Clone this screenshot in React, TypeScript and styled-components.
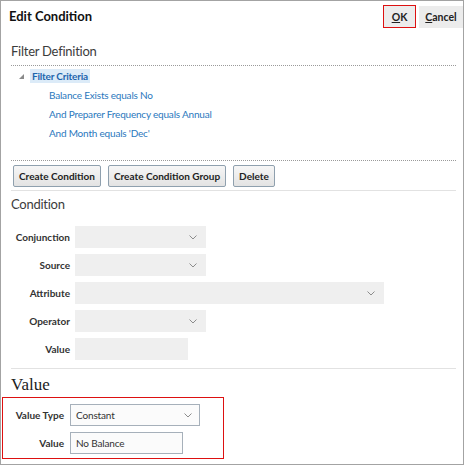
import { Fragment } from "react";
import styled, { createGlobalStyle } from "styled-components";

const GlobalStyle = createGlobalStyle`
    html, body {
        margin: 0;
        padding: 0;
        background: #ffffff;
    }
    * {
        box-sizing: border-box;
    }
`;

const Dialog = styled.div`
    width: 464px;
    height: 465px;
    border: 1px solid #a3a3a3;
    background: #ffffff;
    font-family: Lato, "Liberation Sans", sans-serif;
    color: #333333;
    overflow: hidden;
`;

const Header = styled.div`
    display: flex;
    justify-content: space-between;
    align-items: flex-start;
    height: 31px;
    padding: 4px 0 0 8px;
`;

const Title = styled.h1`
    margin: 3px 0 0;
    font-size: 13px;
    line-height: 16px;
    font-weight: 700;
    color: #111111;
`;

const HeaderButtons = styled.div`
    display: flex;
    gap: 3px;
`;

const HeaderButton = styled.button`
    width: ${(props) => props.$width}px;
    height: ${(props) => (props.$marked ? 23 : 22)}px;
    margin-top: ${(props) => (props.$marked ? 0 : 1)}px;
    padding: 0;
    border: 1px solid ${(props) => (props.$marked ? "#dd1111" : "transparent")};
    background: #ececec;
    font-family: inherit;
    font-size: 10.5px;
    font-weight: 700;
    color: #222222;
    cursor: pointer;

    u {
        text-decoration: underline;
    }
`;

const Body = styled.div`
    padding: 0 7px 0 10px;
`;

const SectionTitle = styled.h2`
    margin: ${(props) => props.$top || 0}px 0 0;
    font-size: 13px;
    line-height: 16px;
    font-weight: 400;
    letter-spacing: -0.25px;
    color: #3c3c3c;
`;

const SerifTitle = styled.h2`
    margin: 6px 0 0;
    font-family: "Liberation Serif", serif;
    font-size: 17px;
    line-height: 20px;
    font-weight: 400;
    color: #222222;
`;

const DottedRule = styled.div`
    border-top: 1px dotted #9a9a9a;
    margin-top: ${(props) => props.$top || 0}px;
`;

const SolidRule = styled.div`
    border-top: 1px solid #e2e2e2;
    margin-top: ${(props) => props.$top || 0}px;
`;

const Tree = styled.ul`
    list-style: none;
    margin: 0;
    padding: 0;
`;

const TreeRow = styled.li`
    display: flex;
    align-items: center;
    height: 19px;
    padding-left: ${(props) => props.$indent}px;
    font-size: 10px;
    letter-spacing: -0.2px;
    color: #2a78bd;
`;

const Toggle = styled.span`
    width: 0;
    height: 0;
    margin: 2px 6px 0 0;
    border-left: 5px solid transparent;
    border-bottom: 5px solid #8a8a8a;
`;

const SelectedNode = styled.span`
    padding: 1px 2px;
    background: #dcebf8;
    font-weight: 700;
    color: #1d65ad;
`;

const Toolbar = styled.div`
    display: flex;
    gap: 7px;
    padding: 4px 0 3px 2px;
`;

const ToolButton = styled.button`
    height: 22px;
    padding: 0 5px;
    border: 1px solid #8fa0ae;
    border-radius: 2px;
    background: linear-gradient(#f6f6f6, #e3e3e3);
    font-family: inherit;
    font-size: 10px;
    font-weight: 700;
    color: #222222;
    cursor: pointer;
`;

const Form = styled.div`
    display: grid;
    grid-template-columns: ${(props) => props.$labelWidth}px auto;
    column-gap: ${(props) => props.$gap}px;
    row-gap: 6px;
    align-items: center;
    justify-items: start;
    margin-top: ${(props) => props.$top || 0}px;
`;

const Label = styled.label`
    justify-self: end;
    font-size: 10px;
    font-weight: 700;
    color: #333333;
`;

const Field = styled.div`
    display: flex;
    align-items: center;
    justify-content: space-between;
    width: ${(props) => props.$width}px;
    height: 22px;
    padding: 0 ${(props) => (props.$outlined ? 7 : 9)}px 0 5px;
    background: ${(props) => (props.$outlined ? "#fbfbfb" : "#efefef")};
    border: ${(props) => (props.$outlined ? "1px solid #a6b0ba" : "none")};
    font-size: 10px;
    letter-spacing: -0.15px;
    color: #333333;
`;

const Highlight = styled.div`
    margin: 2px 0 0 -9px;
    width: 222px;
    padding: 6px 0 4px;
    border: 1px solid #dd1111;
`;

const Chevron = () => (
    <svg width="8" height="5" viewBox="0 0 8 5">
        <polyline points="0.5,0.5 4,4 7.5,0.5" fill="none" stroke="#8c8c8c" strokeWidth="1" />
    </svg>
);

const criteria = [
    "Balance Exists equals No",
    "And Preparer Frequency equals Annual",
    "And Month equals 'Dec'",
];

const conditionFields = [
    { label: "Conjunction", width: 131, select: true },
    { label: "Source", width: 131, select: true },
    { label: "Attribute", width: 309, select: true },
    { label: "Operator", width: 131, select: true },
    { label: "Value", width: 113, select: false },
];

const App = () => {
    return (
        <>
            <GlobalStyle />
            <Dialog>
                <Header>
                    <Title>Edit Condition</Title>
                    <HeaderButtons>
                        <HeaderButton $marked $width={33}>
                            <u>O</u>K
                        </HeaderButton>
                        <HeaderButton $width={44}>
                            <u>C</u>ancel
                        </HeaderButton>
                    </HeaderButtons>
                </Header>
                <Body>
                    <SectionTitle $top={11}>Filter Definition</SectionTitle>
                    <DottedRule $top={6} />
                    <Tree>
                        <TreeRow $indent={8}>
                            <Toggle />
                            <SelectedNode>Filter Criteria</SelectedNode>
                        </TreeRow>
                        {criteria.map((item) => (
                            <TreeRow key={item} $indent={38}>
                                {item}
                            </TreeRow>
                        ))}
                    </Tree>
                    <DottedRule $top={18} />
                    <Toolbar>
                        <ToolButton>Create Condition</ToolButton>
                        <ToolButton>Create Condition Group</ToolButton>
                        <ToolButton>Delete</ToolButton>
                    </Toolbar>
                    <SolidRule />
                    <SectionTitle $top={5}>Condition</SectionTitle>
                    <Form $labelWidth={59} $gap={5} $top={14}>
                        {conditionFields.map((f) => (
                            <Fragment key={f.label}>
                                <Label>{f.label}</Label>
                                <Field $width={f.width}>
                                    <span />
                                    {f.select && <Chevron />}
                                </Field>
                            </Fragment>
                        ))}
                    </Form>
                    <SolidRule $top={8} />
                    <SerifTitle>Value</SerifTitle>
                    <Highlight>
                        <Form $labelWidth={61} $gap={6}>
                            <Label>Value Type</Label>
                            <Field $width={130} $outlined>
                                <span>Constant</span>
                                <Chevron />
                            </Field>
                            <Label>Value</Label>
                            <Field $width={113} $outlined>
                                <span>No Balance</span>
                            </Field>
                        </Form>
                    </Highlight>
                </Body>
            </Dialog>
        </>
    );
};

export default App;
